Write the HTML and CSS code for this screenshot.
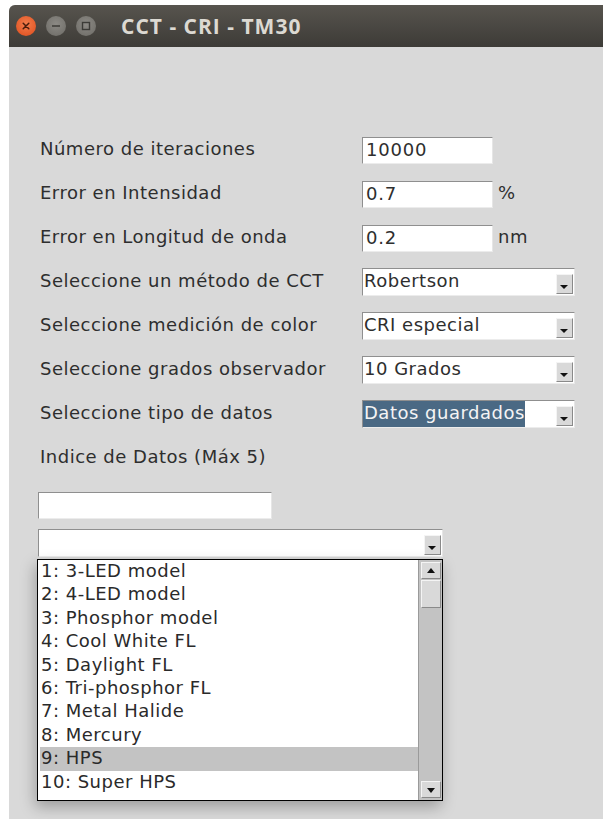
FILE: index.html
```html
<!DOCTYPE html>
<html lang="es">
<head>
<meta charset="utf-8">
<title>CCT - CRI - TM30</title>
<link rel="stylesheet" href="styles.css">
</head>
<body>
<div class="window">
  <header class="titlebar">
    <div class="controls">
      <span class="wbtn close"><svg viewBox="0 0 20 20" width="20" height="20"><path d="M7.2 7.2 L12.8 12.8 M12.8 7.2 L7.2 12.8" stroke="#4a1c0c" stroke-width="1.5" stroke-linecap="round"/></svg></span>
      <span class="wbtn"><svg viewBox="0 0 20 20" width="20" height="20"><path d="M6 10 H14" stroke="#3c3b37" stroke-width="1.6"/></svg></span>
      <span class="wbtn"><svg viewBox="0 0 20 20" width="20" height="20"><rect x="6.5" y="6.5" width="7" height="7" fill="none" stroke="#3c3b37" stroke-width="1.4"/></svg></span>
    </div>
    <h1 class="title">CCT - CRI - TM30</h1>
  </header>

  <main class="content">
    <div class="form">
      <div class="row">
        <label class="lbl">Número de iteraciones</label>
        <div class="entry">10000</div>
      </div>
      <div class="row">
        <label class="lbl">Error en Intensidad</label>
        <div class="entry">0.7</div>
        <span class="unit">%</span>
      </div>
      <div class="row">
        <label class="lbl">Error en Longitud de onda</label>
        <div class="entry">0.2</div>
        <span class="unit">nm</span>
      </div>
      <div class="row">
        <label class="lbl">Seleccione un método de CCT</label>
        <div class="combo"><span class="val">Robertson</span><span class="arrow"></span></div>
      </div>
      <div class="row">
        <label class="lbl">Seleccione medición de color</label>
        <div class="combo"><span class="val">CRI especial</span><span class="arrow"></span></div>
      </div>
      <div class="row">
        <label class="lbl">Seleccione grados observador</label>
        <div class="combo"><span class="val">10 Grados</span><span class="arrow"></span></div>
      </div>
      <div class="row">
        <label class="lbl">Seleccione tipo de datos</label>
        <div class="combo"><span class="val sel">Datos guardados</span><span class="arrow"></span></div>
      </div>
      <div class="row">
        <label class="lbl">Indice de Datos (Máx 5)</label>
      </div>
    </div>

    <div class="data-block">
      <div class="entry wide"></div>
      <div class="combo long"><span class="val"></span><span class="arrow"></span></div>
      <div class="popdown">
        <ul class="listbox">
          <li>1: 3-LED model</li>
          <li>2: 4-LED model</li>
          <li>3: Phosphor model</li>
          <li>4: Cool White FL</li>
          <li>5: Daylight FL</li>
          <li>6: Tri-phosphor FL</li>
          <li>7: Metal Halide</li>
          <li>8: Mercury</li>
          <li class="active">9: HPS</li>
          <li>10: Super HPS</li>
        </ul>
        <div class="scrollbar">
          <span class="sbtn up"></span>
          <div class="trough"><span class="thumb"></span></div>
          <span class="sbtn down"></span>
        </div>
      </div>
    </div>
  </main>
</div>
</body>
</html>
```

FILE: styles.css
```css
html, body {
  margin: 0;
  padding: 0;
  background: #ffffff;
  height: 100%;
  overflow: hidden;
}

body {
  font-family: "DejaVu Sans", "Liberation Sans", sans-serif;
  font-size: 18px;
  letter-spacing: 0.5px;
  color: #2e2e2e;
}

.window {
  margin: 5px 0 0 9px;
  height: calc(100% - 5px);
  background: #d9d9d9;
  border-radius: 6px 0 0 0;
  overflow: hidden;
}

/* title bar */
.titlebar {
  height: 42px;
  background: linear-gradient(#57544e, #3d3b37);
  display: flex;
  align-items: center;
  padding-left: 7px;
}

.controls {
  display: flex;
  gap: 10px;
}

.wbtn {
  width: 20px;
  height: 20px;
  border-radius: 50%;
  background: radial-gradient(circle at 50% 40%, #8c8a85, #6c6a65);
  display: block;
}

.wbtn svg { display: block; }

.wbtn.close {
  background: radial-gradient(circle at 50% 40%, #f27d4c, #dd4b1b);
}

.title {
  margin: 0 0 0 25px;
  font-family: "Open Sans", "DejaVu Sans", sans-serif;
  font-weight: 700;
  font-size: 21px;
  letter-spacing: 1px;
  color: #dcd9d2;
}

/* body */
.content {
  padding: 81px 0 0 31px;
}

.form {
  display: flex;
  flex-direction: column;
}

.row {
  height: 44px;
  display: flex;
  align-items: center;
}

.lbl {
  width: 322px;
  white-space: nowrap;
  padding-bottom: 3px;
}

.unit {
  margin-left: 5px;
  padding-bottom: 3px;
}

.entry {
  box-sizing: border-box;
  width: 131px;
  height: 27px;
  background: #ffffff;
  border-top: 1px solid #8f8f8f;
  border-left: 1px solid #8f8f8f;
  border-right: 1px solid #e6e6e6;
  border-bottom: 1px solid #ececec;
  line-height: 23px;
  padding-left: 3px;
  letter-spacing: 0.8px;
}

.combo {
  box-sizing: border-box;
  width: 213px;
  height: 28px;
  background: #ffffff;
  border-top: 1px solid #8f8f8f;
  border-left: 1px solid #8f8f8f;
  border-right: 1px solid #e6e6e6;
  border-bottom: 1px solid #ececec;
  display: flex;
  align-items: stretch;
}

.combo .val {
  flex: 1;
  line-height: 23px;
  padding-left: 1px;
  padding-bottom: 2px;
  white-space: nowrap;
}

.combo .val.sel {
  flex: 0 0 auto;
  background: #4a6984;
  color: #f4f4f4;
  margin-right: auto;
}

.arrow {
  box-sizing: border-box;
  width: 17px;
  height: 20px;
  align-self: flex-end;
  margin: 0 1px 1px 0;
  background: #d9d9d9;
  border-top: 1px solid #f4f4f4;
  border-left: 1px solid #f4f4f4;
  border-right: 1px solid #8a8a8a;
  border-bottom: 1px solid #8a8a8a;
  position: relative;
}

.arrow::after {
  content: "";
  position: absolute;
  left: 3px;
  bottom: 4px;
  border-left: 4px solid transparent;
  border-right: 4px solid transparent;
  border-top: 4px solid #111;
}

/* lower block */
.data-block {
  margin-left: -2px;
  padding-top: 12px;
  display: flex;
  flex-direction: column;
  align-items: flex-start;
}

.entry.wide {
  width: 234px;
}

.combo.long {
  width: 405px;
  margin-top: 10px;
}

.popdown {
  margin-top: 2px;
  margin-left: -1px;
  width: 406px;
  height: 242px;
  box-sizing: border-box;
  border: 1px solid #000;
  background: #ffffff;
  display: flex;
  box-shadow: -2px 6px 14px rgba(0, 0, 0, 0.28);
}

.listbox {
  list-style: none;
  margin: 0;
  padding: 0 0 0 2px;
  flex: 1;
  color: #2a2a2a;
}

.listbox li {
  box-sizing: border-box;
  height: 23.4px;
  line-height: 21.4px;
  padding: 0 0 2px 1px;
  white-space: nowrap;
}

.listbox li.active {
  background: #c3c3c3;
}

.scrollbar {
  width: 24px;
  background: #c3c3c3;
  border-left: 1px solid #9a9a9a;
  display: flex;
  flex-direction: column;
  align-items: center;
  padding: 2px 0;
  box-sizing: border-box;
}

.sbtn {
  box-sizing: border-box;
  width: 20px;
  height: 17px;
  background: #d9d9d9;
  border-top: 1px solid #f4f4f4;
  border-left: 1px solid #f4f4f4;
  border-right: 1px solid #8a8a8a;
  border-bottom: 1px solid #8a8a8a;
  position: relative;
}

.sbtn::after {
  content: "";
  position: absolute;
  left: 5px;
  top: 5px;
  border-left: 4px solid transparent;
  border-right: 4px solid transparent;
}

.sbtn.up::after { border-bottom: 5px solid #111; }
.sbtn.down::after { border-top: 5px solid #111; top: 6px; }

.trough {
  flex: 1;
  width: 20px;
  padding-top: 1px;
}

.thumb {
  display: block;
  box-sizing: border-box;
  width: 20px;
  height: 28px;
  background: #d9d9d9;
  border-top: 1px solid #f4f4f4;
  border-left: 1px solid #f4f4f4;
  border-right: 1px solid #8a8a8a;
  border-bottom: 1px solid #8a8a8a;
}
```
